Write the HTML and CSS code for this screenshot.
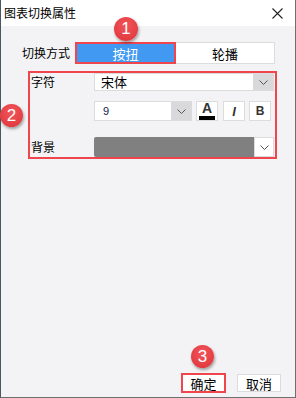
FILE: index.html
```html
<!DOCTYPE html>
<html lang="zh-CN">
<head>
    <meta charset="UTF-8">
    <title>图表切换属性</title>
    <link rel="stylesheet" href="styles.css">
</head>
<body>

<div class="window">
    <div class="titlebar">
        <span class="title">图表切换属性</span>
        <svg class="close" width="11" height="11" viewBox="0 0 11 11">
            <path d="M0.5 0.5L10.5 10.5M10.5 0.5L0.5 10.5" stroke="#222" stroke-width="1.1" fill="none"/>
        </svg>
    </div>

    <div class="content">
        <div class="seg-row">
            <span class="seg-label">切换方式</span>
            <div class="seg seg-active">按扭</div>
            <div class="seg">轮播</div>
        </div>

        <div class="group">
            <div class="row">
                <span class="label">字符</span>
                <div class="select font-select">
                    <span class="value">宋体</span>
                    <span class="arrow grey">
                        <svg width="9" height="5" viewBox="0 0 9 5"><path d="M0.5 0.5L4.5 4.5L8.5 0.5" stroke="#555" fill="none"/></svg>
                    </span>
                </div>
            </div>
            <div class="row row-tools">
                <span class="label"></span>
                <div class="select size-select">
                    <span class="value size">9</span>
                    <span class="arrow grey">
                        <svg width="9" height="5" viewBox="0 0 9 5"><path d="M0.5 0.5L4.5 4.5L8.5 0.5" stroke="#555" fill="none"/></svg>
                    </span>
                </div>
                <div class="tool tool-a"><span>A</span><i class="bar"></i></div>
                <div class="tool tool-i">I</div>
                <div class="tool tool-b">B</div>
            </div>
            <div class="row row-bg">
                <span class="label">背景</span>
                <div class="select color-select">
                    <span class="swatch"></span>
                    <span class="arrow white">
                        <svg width="9" height="5" viewBox="0 0 9 5"><path d="M0.5 0.5L4.5 4.5L8.5 0.5" stroke="#555" fill="none"/></svg>
                    </span>
                </div>
            </div>
        </div>
    </div>

    <div class="footer">
        <div class="btn btn-ok">确定</div>
        <div class="btn">取消</div>
    </div>

    <div class="badge badge-1">1</div>
    <div class="badge badge-2">2</div>
    <div class="badge badge-3">3</div>
</div>

</body>
</html>
```

FILE: styles.css
```css
body {
    margin: 0;
    font-family: "Noto Sans CJK SC", "Liberation Sans", sans-serif;
    font-size: 12px;
    color: #000;
    background-color: #f3f3f5;
}
.window {
    position: relative;
    width: 296px;
    height: 398px;
    box-sizing: border-box;
    border: 1px solid #6f6f6f;
    border-top: 0;
    border-left-color: #4b5663;
    background-color: #f3f3f5;
    display: flex;
    flex-direction: column;
}
.titlebar {
    height: 26px;
    background-color: #fff;
    display: flex;
    align-items: center;
    justify-content: space-between;
    padding: 0 12px 0 3px;
}
.title {
    font-size: 12px;
    line-height: 14px;
}
.content {
    padding-top: 16px;
}
.seg-row {
    display: flex;
    align-items: center;
    height: 22px;
}
.seg-label {
    width: 53px;
    padding-left: 21px;
    font-size: 12px;
    line-height: 16px;
}
.seg {
    box-sizing: border-box;
    height: 22px;
    width: 99px;
    background-color: #fff;
    border: 1px solid #dcdcdc;
    border-left: 0;
    display: flex;
    align-items: center;
    justify-content: center;
    font-size: 13px;
}
.seg-active {
    width: 101px;
    border: 2px solid #f0454d;
    background-color: #4199f2;
    color: #fff;
}
.group {
    box-sizing: border-box;
    margin: 7px 0 0 27px;
    width: 249px;
    height: 88px;
    border: 2px solid #f0454d;
    display: flex;
    flex-direction: column;
}
.row {
    display: flex;
    align-items: center;
}
.row-tools {
    margin-top: 10px;
}
.row-bg {
    margin-top: 16px;
}
.label {
    width: 64px;
    padding-left: 1px;
    box-sizing: border-box;
    font-size: 12px;
    line-height: 16px;
}
.select {
    box-sizing: border-box;
    display: flex;
    background-color: #fff;
    border: 1px solid #dcdcdc;
}
.font-select {
    width: 180px;
    height: 18px;
}
.size-select {
    width: 98px;
    height: 20px;
}
.color-select {
    width: 180px;
    height: 20px;
    border: 0;
    background: none;
}
.value {
    flex: 1;
    padding-left: 6px;
    font-size: 13px;
    line-height: 16px;
}
.value.size {
    padding-left: 8px;
    font-size: 11px;
    line-height: 18px;
    color: #102050;
    font-family: "Liberation Sans", sans-serif;
}
.arrow {
    width: 20px;
    display: flex;
    align-items: center;
    justify-content: center;
}
.arrow.grey {
    background-color: #d9d9dc;
}
.arrow.white {
    box-sizing: border-box;
    background-color: #fff;
    border: 1px solid #dcdcdc;
}
.swatch {
    flex: 1;
    background-color: #808080;
    border-radius: 2px 0 0 2px;
}
.tool {
    box-sizing: border-box;
    width: 22px;
    height: 20px;
    margin-left: 4px;
    background-color: #fff;
    border: 1px solid #dcdcdc;
    display: flex;
    flex-direction: column;
    align-items: center;
    justify-content: center;
    font-family: "Liberation Sans", sans-serif;
    color: #333;
}
.tool-a span {
    font-size: 14px;
    font-weight: bold;
    line-height: 11px;
    margin-top: 1px;
}
.tool-a .bar {
    display: block;
    width: 16px;
    height: 4px;
    margin-top: 2px;
    background-color: #000;
}
.tool-i {
    margin-left: 5px;
    font-style: italic;
    font-weight: bold;
    font-size: 13px;
}
.tool-b {
    font-weight: bold;
    font-size: 12px;
}
.footer {
    margin-top: auto;
    display: flex;
    justify-content: flex-end;
    align-items: center;
    gap: 11px;
    padding: 0 14px 4px 0;
}
.btn {
    box-sizing: border-box;
    width: 44px;
    height: 18px;
    background-color: #fff;
    border: 1px solid #dcdcdc;
    display: flex;
    align-items: center;
    justify-content: center;
    font-size: 13px;
}
.btn-ok {
    width: 45px;
    height: 20px;
    border: 2px solid #f0454d;
}
.badge {
    position: absolute;
    width: 23px;
    height: 23px;
    border-radius: 50%;
    background: radial-gradient(circle at 50% 35%, #f2555a, #dc3338);
    box-shadow: 1px 2px 3px rgba(0, 0, 0, 0.35);
    color: #fff;
    font-family: "Liberation Sans", sans-serif;
    font-size: 17px;
    line-height: 23px;
    text-align: center;
}
.badge-1 {
    left: 113px;
    top: 17px;
    width: 24px;
    height: 24px;
    line-height: 24px;
}
.badge-2 {
    left: -1px;
    top: 104px;
}
.badge-3 {
    left: 190px;
    top: 345px;
}
```
